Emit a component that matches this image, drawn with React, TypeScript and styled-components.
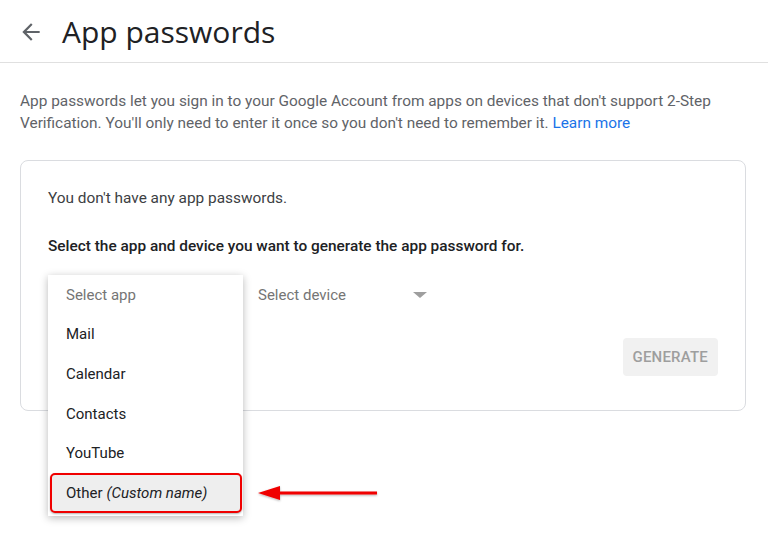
import styled, { createGlobalStyle } from 'styled-components';

const GlobalStyle = createGlobalStyle`
  body {
    margin: 0;
    background: #fff;
    font-family: Roboto, 'Liberation Sans', Arial, sans-serif;
  }
`;

const apps = ['Mail', 'Calendar', 'Contacts', 'YouTube'];

function BackArrow() {
  return (
    <svg width="26" height="26" viewBox="0 0 24 24">
      <path
        d="M20 11H7.83l5.59-5.59L12 4l-8 8 8 8 1.41-1.41L7.83 13H20v-2z"
        fill="#5f6368"
      />
    </svg>
  );
}

function CalloutArrow() {
  return (
    <svg width="126" height="24" viewBox="0 0 126 24">
      <defs>
        <filter id="sh" x="-10%" y="-50%" width="120%" height="200%">
          <feDropShadow dx="0" dy="1" stdDeviation="1" floodOpacity="0.3" />
        </filter>
      </defs>
      <g filter="url(#sh)">
        <line x1="20" y1="11" x2="121" y2="11" stroke="#f00000" strokeWidth="3" />
        <polygon points="2,11 24,4 24,18" fill="#f00000" />
      </g>
    </svg>
  );
}

export default function App() {
  return (
    <Page>
      <GlobalStyle />
      <Header>
        <BackButton>
          <BackArrow />
        </BackButton>
        <Title>App passwords</Title>
      </Header>
      <Intro>
        App passwords let you sign in to your Google Account from apps on devices
        that don't support 2-Step Verification. You'll only need to enter it once
        so you don't need to remember it. <Link>Learn more</Link>
      </Intro>
      <Card>
        <Note>You don't have any app passwords.</Note>
        <Prompt>Select the app and device you want to generate the app password for.</Prompt>
        <SelectRow>
          <Select width={195}>
            <Menu>
              <MenuItem muted>Select app</MenuItem>
              {apps.map((app) => (
                <MenuItem key={app}>{app}</MenuItem>
              ))}
              <MenuItem highlighted>
                Other <em>(Custom name)</em>
              </MenuItem>
            </Menu>
          </Select>
          <Select width={186}>
            <SelectLabel>Select device</SelectLabel>
            <Caret />
          </Select>
          <Callout>
            <CalloutArrow />
          </Callout>
        </SelectRow>
        <Actions>
          <GenerateButton disabled>GENERATE</GenerateButton>
        </Actions>
      </Card>
    </Page>
  );
}

const Page = styled.div`
  width: 768px;
  height: 547px;
  overflow: hidden;
`;

const Header = styled.header`
  display: flex;
  align-items: center;
  height: 63px;
  padding-left: 18px;
  border-bottom: 1px solid #e0e0e0;
  box-sizing: border-box;
`;

const BackButton = styled.div`
  display: flex;
  width: 26px;
  height: 26px;
  margin-right: 18px;
  margin-top: 2px;
`;

const Title = styled.h1`
  margin: 0;
  font-family: 'Open Sans', Roboto, sans-serif;
  font-weight: 400;
  font-size: 30px;
  color: #202124;
  letter-spacing: 0;
`;

const Intro = styled.p`
  margin: 27px 20px 0;
  font-size: 15.4px;
  line-height: 22px;
  color: #5f6368;
`;

const Link = styled.a`
  color: #1a73e8;
  cursor: pointer;
`;

const Card = styled.section`
  height: 251px;
  margin: 26px 22px 0 20px;
  padding: 27px 27px 0;
  border: 1px solid #dadce0;
  border-radius: 8px;
  box-sizing: border-box;
`;

const Note = styled.div`
  font-size: 15.4px;
  line-height: 20px;
  color: #3c4043;
`;

const Prompt = styled.div`
  margin-top: 28px;
  font-size: 15.4px;
  font-weight: 500;
  line-height: 20px;
  color: #202124;
`;

const SelectRow = styled.div`
  position: relative;
  display: flex;
  gap: 15px;
  margin-top: 19px;
  height: 40px;
`;

const Select = styled.div<{ width: number }>`
  position: relative;
  display: flex;
  align-items: center;
  justify-content: space-between;
  width: ${({ width }) => width}px;
  padding: 0 17px 0 0;
  box-sizing: border-box;
`;

const SelectLabel = styled.span`
  font-size: 15px;
  color: #757575;
`;

const Caret = styled.span`
  width: 0;
  height: 0;
  border-left: 7px solid transparent;
  border-right: 7px solid transparent;
  border-top: 6px solid #9e9e9e;
`;

const Menu = styled.div`
  position: absolute;
  left: 0;
  top: 0;
  width: 195px;
  padding-bottom: 3px;
  background: #fff;
  box-shadow: 0 2px 8px rgba(0, 0, 0, 0.28);
  z-index: 2;
`;

const MenuItem = styled.div<{ muted?: boolean; highlighted?: boolean }>`
  display: flex;
  align-items: center;
  gap: 4px;
  height: 39.6px;
  padding-left: 18px;
  font-size: 15px;
  color: ${({ muted }) => (muted ? '#757575' : '#202124')};
  box-sizing: border-box;
  ${({ highlighted }) =>
    highlighted &&
    `
    margin: 0 1px 0 2px;
    padding-left: 14px;
    background: #eeeeee;
    border: 2.5px solid #f00000;
    border-radius: 5px;
    box-shadow: 0 1px 2px rgba(0, 0, 0, 0.3);
  `}

  em {
    font-style: italic;
  }
`;

const Callout = styled.div`
  position: absolute;
  left: 208px;
  top: 207px;
  z-index: 3;
`;

const Actions = styled.div`
  display: flex;
  justify-content: flex-end;
  margin-top: 23px;
`;

const GenerateButton = styled.button`
  height: 38px;
  padding: 0 10px;
  border: none;
  border-radius: 4px;
  background: #f1f1f1;
  color: #9e9e9e;
  font-family: Roboto, sans-serif;
  font-size: 15px;
  font-weight: 500;
  letter-spacing: 0.2px;
`;
